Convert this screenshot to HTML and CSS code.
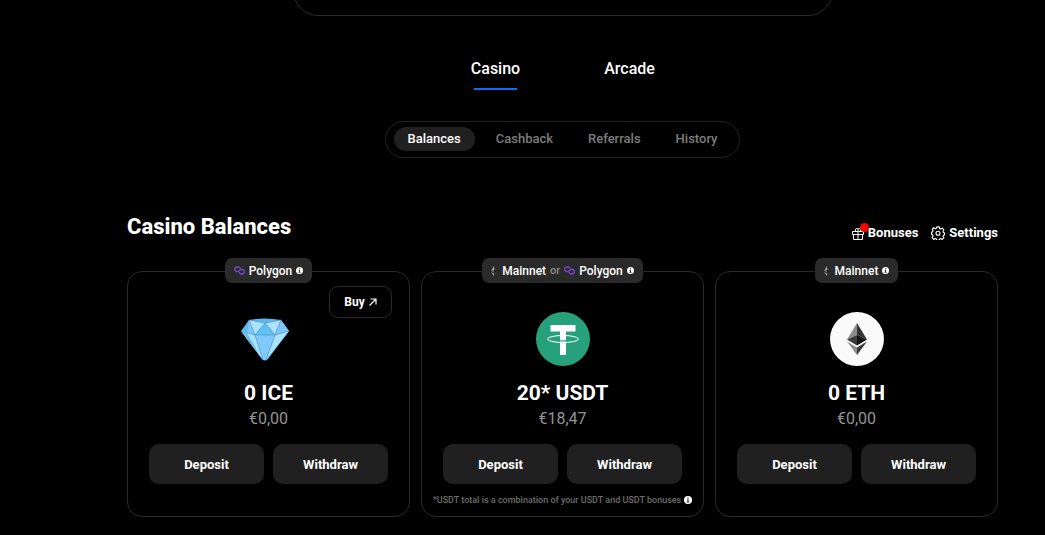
FILE: index.html
```
<!DOCTYPE html>
<html lang="en">
<head>
    <meta charset="UTF-8">
    <meta name="viewport" content="width=device-width, initial-scale=1.0">
    <title>Casino Balances</title>
    <link rel="stylesheet" href="styles.css">
</head>
<body>

    <!-- Shared icons -->
    <svg class="icon-defs" aria-hidden="true">
        <symbol id="icon-polygon" viewBox="0 0 22 18">
            <g fill="none" stroke="#7c45d0" stroke-width="2.600" stroke-linejoin="round">
                <path d="M12.500 5.500V4.500L9.500 2H4.500L1.500 4.500v4l3 2.500H8l6-4h4l2.500 2.500v4L17.500 16h-4l-3-2.500V12" />
            </g>
        </symbol>
        <symbol id="icon-eth" viewBox="0 0 20 32">
            <path fill="#8c8c8c" d="M10 0 0 16.500 10 12z" />
            <path fill="#343434" d="M10 0 20 16.500 10 12z" />
            <path fill="#393939" d="M0 16.500 10 12V22.500z" />
            <path fill="#141414" d="M20 16.500 10 12V22.500z" />
            <path fill="#8c8c8c" d="M0 18.500 10 24.500V32z" />
            <path fill="#3c3c3b" d="M20 18.500 10 24.500V32z" />
        </symbol>
        <symbol id="icon-mainnet" viewBox="0 0 10 20">
            <path fill="#a8a8a8" d="M6 0 0 10 6 8zM0 12 6 15.500V20z" />
            <path fill="#484848" d="M6 0 10 10 6 8zM10 12 6 15.500V20z" />
            <path fill="#6a6a6a" d="M0 10 6 8V13.500z" />
            <path fill="#161616" d="M6 8 10 10 6 13.500z" />
        </symbol>
        <symbol id="icon-info" viewBox="0 0 16 16">
            <circle cx="8" cy="8" r="8" fill="#fff" />
            <path fill="#222" d="M6.800 3h2.400v2.400H6.800zM6 6.800h3.200v4.400h1V13H6v-1.800h1V8.500H6z" />
        </symbol>
    </svg>

    <main class="page">
        <div class="profile-panel"></div>

        <!-- Main tabs -->
        <nav class="tabs">
            <a href="#casino" class="tab active">Casino</a>
            <a href="#arcade" class="tab">Arcade</a>
        </nav>

        <!-- Section switcher -->
        <div class="switcher">
            <button class="switch active">Balances</button>
            <button class="switch">Cashback</button>
            <button class="switch">Referrals</button>
            <button class="switch">History</button>
        </div>

        <header class="section-header">
            <h1>Casino Balances</h1>
            <div class="actions">
                <button class="action">
                    <span class="action-icon">
                        <svg width="12" height="13" viewBox="0 0 12 13" fill="none" stroke="#fff">
                            <path d="M.5 4.500h11v3H.5zM1.500 7.500v5h9v-5M6 4.500v8M3.500 4.500v-2q0-1 1.250-1T6 2.500v2M6 2.500q0-1 1.250-1t1.250 1v2" />
                        </svg>
                        <span class="dot"></span>
                    </span>
                    Bonuses
                </button>
                <button class="action">
                    <svg width="14" height="14" viewBox="0 0 24 24" fill="none" stroke="#fff" stroke-width="1.900" stroke-linejoin="round">
                        <path d="M10 1.500h4l.7 3 1.900.8 2.700-1.600 2.800 2.800-1.600 2.700.8 1.900 1.700.6v3.600l-1.700.7-.8 1.900 1.500 2.500-2.700 2.700-2.600-1.500-2 .8-.7 2.200h-4l-.7-2.200-1.900-.8-2.600 1.500L2 19.500 3.500 17l-.8-2L1 14.300v-3.600l1.700-.7.8-1.800L2 5.700 4.800 3l2.600 1.600 1.900-.8z" />
                        <circle cx="12" cy="12.500" r="3.400" />
                    </svg>
                    Settings
                </button>
            </div>
        </header>

        <!-- Balance cards -->
        <section class="cards">
            <article class="card">
                <div class="network">
                    <svg width="11" height="9"><use href="#icon-polygon" /></svg>
                    <span>Polygon</span>
                    <svg width="7" height="7"><use href="#icon-info" /></svg>
                </div>
                <button class="buy">
                    Buy
                    <svg width="8" height="8" viewBox="0 0 8 8" fill="none" stroke="#fff" stroke-width="1.200"><path d="M1.500 1h5.500v5.500M7 1 .5 7.500" /></svg>
                </button>
                <div class="coin coin-ice">
                    <svg width="48" height="43" viewBox="0 0 48 43">
                        <path fill="#5bb9f0" d="M0 13 8 2Q24-1 40 2l8 11-21 28q-3 3-6 0z" />
                        <path fill="#ade2fd" d="M8 2 24 5 14 17zM40 2 24 5 34 17zM0 13l14 4 8 25zM48 13l-14 4-9 25z" />
                        <path fill="#7fc6fb" d="M40 2l8 11-14 4zM8 2 6 15l8 2z" />
                        <path fill="#80c9fc" d="M14 17h20l-9 25h-3z" />
                        <path fill="#61c0f4" d="M24 5l10 12H14z" />
                        <path fill="#6fbcee" d="M0 13l6 2 15 26z" />
                        <path fill="none" stroke="#4e8db8" stroke-width=".6" d="M8 2l6 15 10-12 10 12 6-15M8 2l16 3 16-3M0 13l14 4h20l14-4M14 17l8 25M34 17l-9 25" />
                    </svg>
                </div>
                <h2>0 ICE</h2>
                <p class="fiat">€0,00</p>
                <div class="card-buttons">
                    <button>Deposit</button>
                    <button>Withdraw</button>
                </div>
            </article>

            <article class="card">
                <div class="network">
                    <svg class="mainnet" width="5" height="10"><use href="#icon-mainnet" /></svg>
                    <span>Mainnet</span>
                    <span class="or">or</span>
                    <svg width="11" height="9"><use href="#icon-polygon" /></svg>
                    <span>Polygon</span>
                    <svg width="7" height="7"><use href="#icon-info" /></svg>
                </div>
                <div class="coin">
                    <svg width="54" height="54" viewBox="0 0 54 54">
                        <circle cx="27" cy="27" r="27" fill="#26a17b" />
                        <path fill="#fff" d="M14.500 13h25v6.500H30V43h-6V19.500h-9.500z" />
                        <ellipse cx="27" cy="27" rx="15.500" ry="3.500" fill="none" stroke="#fff" />
                        <path stroke="#26a17b" stroke-width="1.200" d="M24 28.900h6" />
                    </svg>
                </div>
                <h2>20* USDT</h2>
                <p class="fiat">€18,47</p>
                <div class="card-buttons">
                    <button>Deposit</button>
                    <button>Withdraw</button>
                </div>
                <p class="note">
                    *USDT total is a combination of your USDT and USDT bonuses
                    <svg width="8" height="8"><use href="#icon-info" /></svg>
                </p>
            </article>

            <article class="card">
                <div class="network">
                    <svg class="mainnet" width="5" height="10"><use href="#icon-mainnet" /></svg>
                    <span>Mainnet</span>
                    <svg width="7" height="7"><use href="#icon-info" /></svg>
                </div>
                <div class="coin coin-eth">
                    <svg width="20" height="32"><use href="#icon-eth" /></svg>
                </div>
                <h2>0 ETH</h2>
                <p class="fiat">€0,00</p>
                <div class="card-buttons">
                    <button>Deposit</button>
                    <button>Withdraw</button>
                </div>
            </article>
        </section>
    </main>

</body>
</html>
```
FILE: styles.css
```
* {
    box-sizing: border-box;
}

body {
    font-family: Roboto, 'Liberation Sans', sans-serif;
    background: #000;
    color: #fff;
    margin: 0;
}

h1, h2, p {
    margin: 0;
}

svg {
    display: block;
    flex: none;
}

button {
    font-family: inherit;
    color: inherit;
    background: none;
    border: none;
    padding: 0;
    cursor: pointer;
}

.icon-defs {
    position: absolute;
    width: 0;
    height: 0;
}

.page {
    display: flex;
    flex-direction: column;
    padding: 0 47px 18px 127px;
}

/* Bottom edge of the profile panel */
.profile-panel {
    align-self: center;
    width: 100%;
    max-width: 540px;
    height: 16px;
    position: relative;
    overflow: hidden;
}

.profile-panel::before {
    content: "";
    position: absolute;
    left: 0;
    right: 0;
    bottom: 0;
    height: 80px;
    border: 1px solid #2a2a2a;
    border-radius: 25px;
}

/* Main tabs */
.tabs {
    display: flex;
    justify-content: center;
    margin-top: 42px;
}

.tab {
    display: flex;
    flex-direction: column;
    align-items: center;
    gap: 8px;
    width: 134px;
    height: 32px;
    font-size: 16px;
    line-height: 22px;
    font-weight: 500;
    color: #fff;
    text-decoration: none;
}

.tab.active::after {
    content: "";
    width: 43px;
    height: 2px;
    background: #0a6cff;
}

/* Section switcher */
.switcher {
    display: flex;
    align-self: center;
    gap: 7px;
    margin-top: 31px;
    padding: 5px 8px 6px;
    border: 1px solid #222;
    border-radius: 19px;
}

.switch {
    padding: 0 14px;
    border-radius: 12px;
    font-size: 13px;
    line-height: 24px;
    font-weight: 500;
    color: #7c7c7c;
}

.switch.active {
    background: #202020;
    color: #fff;
}

/* Heading row */
.section-header {
    display: flex;
    justify-content: space-between;
    align-items: flex-end;
    margin-top: 55px;
}

.section-header h1 {
    font-size: 22px;
    line-height: 28px;
    font-weight: 800;
}

.actions {
    display: flex;
    gap: 13px;
}

.action {
    display: flex;
    align-items: center;
    gap: 4px;
    font-size: 13px;
    line-height: 16px;
    font-weight: 700;
}

.action-icon {
    position: relative;
}

.dot {
    position: absolute;
    top: -4px;
    right: -5px;
    width: 9px;
    height: 9px;
    border-radius: 50%;
    background: #f00;
}

/* Cards */
.cards {
    display: grid;
    grid-template-columns: repeat(3, minmax(0, 1fr));
    gap: 11px;
    margin-top: 30px;
}

.card {
    position: relative;
    display: flex;
    flex-direction: column;
    align-items: center;
    min-height: 246px;
    padding: 0 21px;
    border: 1px solid #2a2a2a;
    border-radius: 15px;
}

.network {
    display: flex;
    align-items: center;
    gap: 4px;
    height: 25px;
    margin-top: -14px;
    padding: 0 9px;
    border-radius: 7px;
    background: #2a2a2a;
    font-size: 12px;
    font-weight: 500;
}

.network .mainnet {
    margin-right: 2px;
}

.network .or {
    font-size: 11px;
    color: #8c8c8c;
}

.buy {
    position: absolute;
    top: 14px;
    right: 17px;
    display: flex;
    justify-content: center;
    align-items: center;
    gap: 4px;
    width: 63px;
    height: 32px;
    border: 1px solid #2a2a2a;
    border-radius: 9px;
    font-size: 12px;
    font-weight: 700;
}

.coin {
    display: flex;
    justify-content: center;
    align-items: center;
    width: 54px;
    height: 54px;
    margin-top: 29px;
}

.coin-ice {
    margin-right: 7px;
}

.coin-eth {
    border-radius: 50%;
    background: #fafafa;
}

.card h2 {
    margin-top: 13px;
    font-size: 21px;
    line-height: 28px;
    font-weight: 700;
}

.fiat {
    font-size: 16px;
    line-height: 24px;
    color: #949494;
}

.card-buttons {
    display: grid;
    grid-template-columns: 1fr 1fr;
    gap: 9px;
    width: 100%;
    margin-top: 13px;
}

.card-buttons button {
    height: 40px;
    border-radius: 10px;
    background: #202020;
    font-size: 13px;
    font-weight: 700;
}

.note {
    display: flex;
    align-items: center;
    gap: 3px;
    margin-top: 9px;
    font-size: 9px;
    line-height: 14px;
    font-weight: 500;
    white-space: nowrap;
    color: #6c6c6c;
}
```
